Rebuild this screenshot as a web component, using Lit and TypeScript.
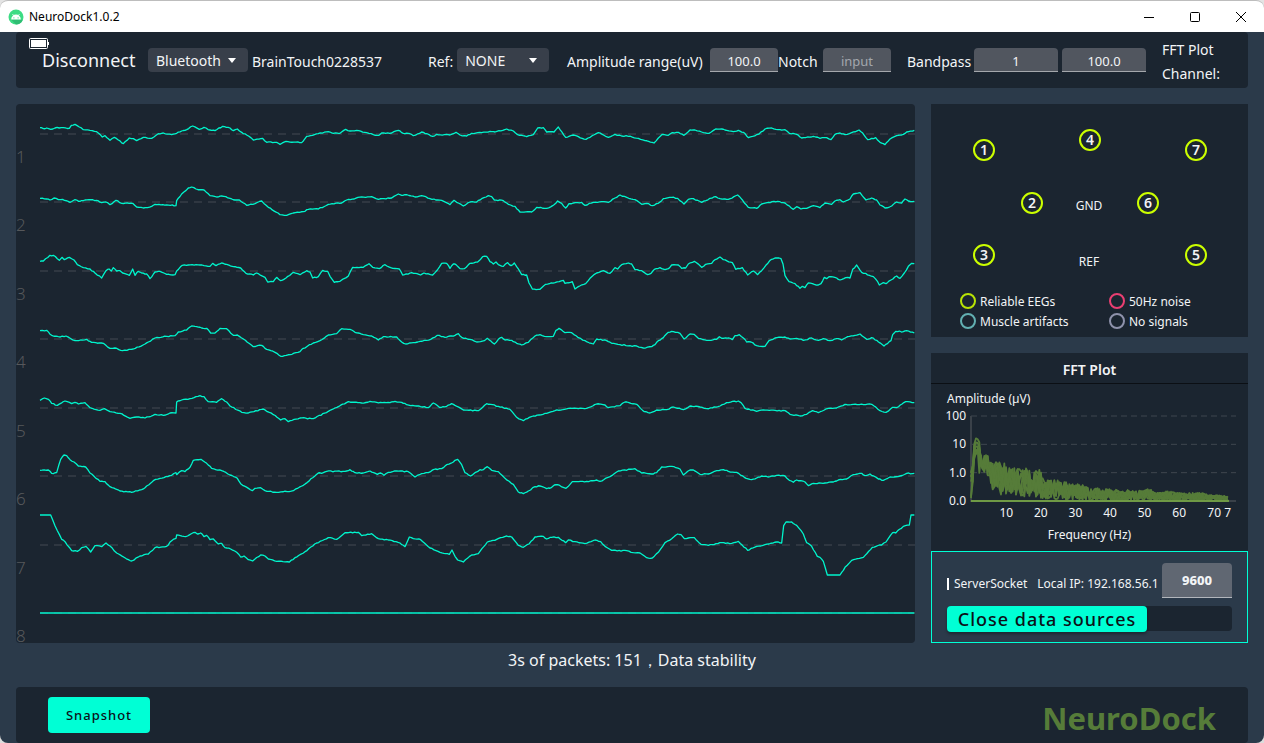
import { LitElement, html, svg, css } from "lit";
import { customElement, property } from "lit/decorators.js";

type Chunk = [origin: number, samples: string];
interface Channel {
  id: number;
  zero: number;
  chunks: Chunk[];
}

/* Each chunk is a run of "time,level" samples; origin shifts its time axis. */
const CHANNELS: Channel[] = [
  { id: 1, zero: 102, chunks: [
    [-120, "120,83 130,86 140,84 152,88 165,84 190,83 208,85 214,76 225,73 238,81 250,89 270,91 290,95 307,111 315,107 330,121 343,112 355,120 370,131 388,114 400,116 410,122 430,112 455,115 475,101 490,99 515,104 530,100 545,93 560,89 578,78 598,88 612,82 630,90 645,92 668,79 690,84 700,92 712,87 725,97 740,105 760,120 788,115 800,127 830,127 840,133 858,124 905,128 920,109 955,101 985,95 1000,100 1020,100 1037,88 1050,93 1070,91 1100,98 1120,104 1137,106 1145,99 1175,99 1195,91 1210,100 1225,100 1240,107 1265,96 1298,109 1310,103 1350,105 1368,97"],
    [1245, "5,98 15,105 35,108 50,100 80,98 105,94 120,96 155,87 175,93 188,104 215,110 235,104 248,84 265,83 275,96 297,96 310,81 332,112 355,105 370,110 393,118 430,98 460,112 480,103 500,108 520,109 550,115 570,122 597,129 622,103 640,106 652,98 670,97 687,106 705,90 720,90 740,96 762,100 782,87 800,87 815,91 835,95 850,91 865,97 880,113 912,102 930,87 950,84 975,89 990,89 1003,100 1025,103 1040,114 1075,109 1095,115 1115,113 1128,119 1140,103 1155,99 1170,104 1190,98 1212,90 1222,98 1238,119 1262,113 1275,127 1290,134 1305,117 1325,107 1340,105 1355,96 1378,91"]] },
  { id: 2, zero: 307, chunks: [
    [-120, "120,296 140,298 150,301 162,295 175,300 188,299 210,308 225,300 240,305 255,301 290,302 305,309 318,307 330,315 348,302 365,311 398,311 410,322 430,325 455,320 465,314 500,316 528,318 530,303 545,283 565,265 575,262 588,268 612,271 630,288 650,292 665,289 690,296 705,301 718,301 740,317 765,312 785,304 805,323 840,345 860,347 880,340 910,336 925,329 955,328 985,314 1025,310 1040,301 1085,292 1115,291 1135,299 1175,295 1195,283 1205,287 1215,285 1245,292 1265,288 1290,297 1325,302 1350,315 1362,302"],
    [1245, "5,308 25,319 45,307 65,307 80,297 100,288 110,291 118,301 145,303 160,314 180,320 195,337 230,337 245,323 275,326 293,318 308,304 320,311 332,325 342,312 355,310 380,308 390,317 415,308 440,306 460,308 480,295 495,286 515,293 540,300 560,314 575,311 593,318 610,311 625,297 650,293 668,296 687,313 700,299 715,297 740,308 765,296 782,291 795,297 820,299 848,286 858,296 880,323 905,326 920,313 940,308 968,305 990,310 1015,329 1025,321 1038,328 1055,326 1075,318 1095,324 1110,310 1130,314 1140,304 1155,300 1165,307 1185,298 1195,283 1215,279 1233,301 1250,295 1265,301 1275,316 1290,325 1310,319 1325,307 1340,310 1350,298 1360,304 1378,305"]] },
  { id: 3, zero: 511, chunks: [
    [-120, "120,482 130,481 150,464 160,464 178,479 186,470 193,477 208,470 222,478 232,492 250,501 270,505 285,517 305,532 318,510 327,505 334,511 340,501 350,511 360,510 368,517 388,524 398,505 405,524 414,512 425,517 440,520 450,534 465,514 480,512 500,521 525,522 530,511 547,494 600,493 630,497 638,488 648,495 665,487 680,491 700,498 722,502 738,518 760,523 770,517 795,530 803,544 820,543 830,530 842,540 858,532 880,515 900,522 920,510 930,514 938,532 955,528 968,509 983,512 990,527 1003,545 1020,542 1045,526 1058,500 1090,500 1107,489 1118,500 1138,504 1155,492 1172,501 1198,505 1208,523 1235,516 1262,523 1272,517 1298,523 1312,508 1325,488 1340,488 1350,503 1360,490"],
    [1245, "0,490 15,504 28,504 45,488 68,484 83,468 95,467 105,483 115,490 123,484 130,492 145,497 158,486 168,495 178,487 185,498 200,522 215,523 222,547 232,565 255,566 272,551 300,546 325,539 330,548 352,543 360,565 370,558 392,549 405,533 425,517 445,510 465,518 480,501 488,505 500,492 520,487 530,490 540,507 560,510 578,522 588,518 598,506 615,501 630,507 640,504 650,493 670,493 680,503 692,502 700,490 718,482 740,500 752,491 770,488 780,477 795,469 805,477 832,486 842,506 862,501 878,523 895,511 908,522 920,510 945,479 960,472 978,474 984,490 990,525 1002,543 1020,549 1035,563 1042,557 1050,561 1060,547 1090,553 1098,549 1108,530 1115,534 1122,528 1145,532 1155,538 1172,531 1185,532 1193,506 1205,493 1220,515 1255,528 1268,543 1273,553 1285,546 1293,549 1308,538 1325,526 1335,533 1348,517 1360,497 1370,488 1378,489"]] },
  { id: 4, zero: 717, chunks: [
    [-120, "120,692 140,691 155,706 175,710 198,708 215,718 230,722 260,718 275,727 310,730 330,745 345,744 368,752 400,747 435,732 445,726 465,714 500,709 525,707 535,696 560,690 575,678 590,680 605,684 620,685 632,699 645,699 660,685 680,686 700,706 712,705 730,717 760,740 785,736 800,748 825,757 842,769 870,764 900,755 910,745 940,729 960,722 985,705 1010,701 1025,686 1045,688 1055,690 1065,697 1080,700 1090,704 1115,708 1135,720 1150,710 1190,711 1205,726 1217,732 1240,728 1260,724 1292,718 1312,706 1335,712 1350,708"],
    [1245, "0,706 10,701 20,712 45,718 65,726 88,722 97,715 118,732 130,718 140,712 150,720 170,721 185,730 200,735 220,727 240,708 255,704 275,710 295,709 303,691 312,685 330,698 350,698 370,713 390,722 415,732 425,717 455,722 470,730 495,734 525,737 545,738 565,744 590,740 600,734 610,722 625,713 640,697 655,695 675,700 687,717 705,702 717,703 730,715 762,721 785,718 793,710 800,715 822,714 832,719 840,707 853,704 865,714 875,726 888,726 905,737 930,739 942,722 960,714 990,711 1005,717 1025,715 1045,721 1070,714 1090,721 1105,716 1125,722 1145,716 1160,720 1178,710 1200,706 1215,702 1235,718 1250,713 1265,721 1287,738 1308,722 1313,704 1322,694 1345,695 1355,692 1378,699"]] },
  { id: 5, zero: 202, chunks: [
    [-120, "120,179 133,172 145,176 155,188 172,194 195,181 215,189 225,185 235,190 255,186 270,201 300,209 313,204 330,213 360,218 390,233 410,229 435,232 465,221 490,224 510,217 528,217 530,184 545,178 570,174 600,165 612,168 625,183 650,185 665,174 680,184 690,196 725,215 745,217 790,205 820,222 842,238 855,234 865,243 900,232 940,234 985,212 1005,202 1045,183 1085,187 1110,182 1130,185 1170,186 1185,182 1205,185 1220,192 1250,196 1285,201 1300,187 1318,200 1340,197 1355,189"],
    [1245, "0,194 25,208 70,210 95,189 130,197 165,206 185,230 205,240 235,226 275,218 300,210 340,203 395,203 425,190 450,193 460,201 495,195 510,184 545,191 568,213 585,217 605,208 635,207 655,199 685,207 705,196 735,199 755,204 795,196 815,186 850,181 858,186 870,203 905,212 925,208 990,210 1005,221 1035,226 1055,221 1073,210 1090,216 1120,203 1145,202 1170,191 1250,191 1275,210 1293,215 1313,200 1325,201 1352,183 1378,186"]] },
  { id: 6, zero: 408, chunks: [
    [-120, "120,391 145,390 155,400 170,398 182,358 192,345 200,347 210,359 222,366 235,378 257,381 270,399 300,424 315,425 330,440 360,453 395,457 425,449 440,438 460,422 480,415 515,406 528,398 530,404 545,392 555,395 570,382 580,361 603,358 620,370 635,385 665,392 690,405 712,415 722,431 757,452 765,445 782,443 795,452 830,457 880,452 910,436 955,399 965,400 980,394 1035,394 1050,389 1065,398 1090,399 1110,393 1132,403 1142,399 1152,406 1165,397 1190,393 1225,395 1245,411 1265,401 1285,398 1300,389 1325,386 1340,374 1360,366"],
    [1245, "0,361 8,358 20,374 30,398 47,408 60,398 75,389 85,389 97,380 110,391 130,395 150,415 175,433 190,456 205,461 220,453 240,440 255,438 275,446 290,442 298,435 308,434 333,445 352,425 395,424 425,420 435,424 465,410 490,393 540,386 560,399 590,402 605,398 620,381 650,379 675,387 685,405 705,390 715,390 735,403 760,402 785,392 805,389 820,394 845,397 868,412 890,419 905,414 920,408 945,410 965,406 990,408 1003,421 1015,427 1025,420 1050,426 1060,437 1075,430 1110,429 1135,426 1150,420 1175,417 1195,404 1220,400 1230,407 1245,402 1270,417 1285,421 1305,411 1335,408 1355,400 1378,400"]] },
  { id: 7, zero: 613, chunks: [
    [-120, "120,523 152,523 165,555 185,596 195,603 215,630 232,632 245,621 258,617 272,634 285,615 305,618 318,607 330,616 350,637 385,657 395,661 420,646 445,640 465,621 500,617 515,600 528,593 530,583 557,588 585,575 592,580 602,577 612,588 620,584 630,597 640,595 655,610 665,608 675,621 692,625 710,635 722,649 732,646 745,657 758,661 782,643 795,646 805,655 830,662 868,664 885,651 915,633 950,607 985,591 1010,596 1035,576 1075,575 1085,585 1115,579 1135,594 1165,598 1200,607 1215,618 1228,589 1240,594 1262,597 1290,622 1320,635 1348,641 1356,628"],
    [1245, "0,647 8,658 25,664 50,643 70,639 97,604 125,596 155,586 170,589 190,614 205,620 222,610 240,589 265,587 275,595 290,590 310,590 332,606 340,598 360,603 390,609 420,598 437,603 450,617 470,629 515,630 535,636 555,637 575,651 592,652 610,635 630,606 650,594 668,580 678,582 688,594 718,591 738,611 760,614 800,606 830,608 850,602 862,614 878,629 905,617 930,612 965,604 980,607 986,555 993,544 1010,544 1025,554 1045,580 1055,606 1070,617 1087,647 1095,650 1105,662 1117,703 1155,703 1170,680 1190,659 1225,650 1252,620 1280,613 1293,604 1313,576 1322,577 1345,557 1363,553 1368,523 1378,523"]] },
  { id: 8, zero: 0, chunks: [[0, "0,0 2623,0"]] },
];

/* Small repeatable generator so the plots look the same on every load. */
function generator(seed: number): () => number {
  let s = seed * 7919 + 17;
  return () => {
    s = (s * 16807) % 2147483647;
    return s / 2147483647;
  };
}

function tracePath(ch: Channel): string {
  const pts: [number, number][] = [];
  for (const [origin, samples] of ch.chunks)
    for (const pair of samples.split(" ")) {
      const [x, y] = pair.split(",").map(Number);
      pts.push([x + origin, y - ch.zero]);
    }
  const rnd = generator(ch.id);
  let d = `M${pts[0][0]} ${pts[0][1]}`;
  for (let i = 1; i < pts.length; i++) {
    const [x0, y0] = pts[i - 1];
    const [x1, y1] = pts[i];
    const clipped = ch.id === 8 || (Math.abs(y0) >= 90 && y0 === y1);
    const n = clipped ? 1 : Math.max(1, Math.round((x1 - x0) / 6));
    for (let k = 1; k <= n; k++) {
      const t = k / n;
      const noise = k === n ? 0 : (rnd() - 0.5) * 3;
      d += `L${(x0 + (x1 - x0) * t).toFixed(1)} ${(y0 + (y1 - y0) * t + noise).toFixed(1)}`;
    }
  }
  return d;
}

const UPPER = [0, 85, 6, 110, 10, 172, 15, 188, 24, 183, 29, 150, 36, 118, 41, 152, 46, 163, 52, 125, 64, 112, 80, 122, 100, 116, 112, 98, 130, 104, 150, 98, 165, 102, 180, 104, 190, 88, 200, 100, 212, 86, 220, 66, 250, 64, 280, 60, 300, 54, 345, 46, 360, 40, 390, 38, 430, 34, 500, 32, 535, 36, 560, 26, 590, 30, 630, 24, 690, 26, 720, 20, 774, 14];
const LOWER = [0, 5, 5, 35, 10, 110, 20, 120, 25, 80, 30, 95, 40, 85, 55, 72, 66, 30, 78, 45, 90, 14, 120, 20, 150, 14, 200, 8, 260, 4, 400, 2, 774, 1];

function level(table: number[], x: number): number {
  for (let i = 2; i < table.length; i += 2)
    if (x <= table[i]) {
      const t = (x - table[i - 2]) / (table[i] - table[i - 2]);
      return table[i - 1] + (table[i + 1] - table[i - 1]) * t;
    }
  return table[table.length - 1];
}

function spectrumPath(index: number): string {
  const rnd = generator(index + 31);
  let d = "";
  for (let x = 0; x <= 774; x += 5) {
    const lo = level(LOWER, x);
    const hi = level(UPPER, x);
    const share = x < 26 && index > 3 ? index / 6 : rnd();
    const spike = index === 3 && x === 380 ? 30 : 0;
    const dip = index === 2 && x === 25 ? 60 : 0;
    d += `${d ? "L" : "M"}${x} ${(255 - lo - (hi - lo) * share - spike + dip).toFixed(1)}`;
  }
  return d;
}

const PINS = [
  { name: "1", x: 53, y: 46 },
  { name: "4", x: 159, y: 36 },
  { name: "7", x: 265, y: 46 },
  { name: "2", x: 101, y: 99 },
  { name: "6", x: 217, y: 99 },
  { name: "3", x: 53, y: 151 },
  { name: "5", x: 265, y: 151 },
];
const MARKS = [
  { name: "GND", x: 158, y: 101 },
  { name: "REF", x: 158, y: 157 },
];

const base = css`
  :host {
    box-sizing: border-box;
    color: #f2f4f6;
    font-family: "Noto Sans", "Open Sans", sans-serif;
  }
  *, *::before, *::after { box-sizing: border-box; }
  button, input, select { font-family: inherit; color: inherit; margin: 0; border: 0; }
`;

@customElement("title-bar")
export class TitleBar extends LitElement {
  static styles = [base, css`
    :host { display: block; background: #e4e4e4; }
    .bar {
      display: flex; align-items: center; justify-content: space-between;
      height: 32px; padding-left: 8px; background: #fff; color: #000;
      border-top: 1px solid #bdbdbd; border-radius: 8px 8px 0 0;
    }
    .name { display: flex; align-items: center; gap: 5px; font-size: 12px; }
    .buttons { display: flex; }
    .button { width: 46px; height: 30px; padding: 0; background: none; display: grid; place-items: center; color: #000; }
    svg { display: block; }
  `];
  render() {
    return html`<div class="bar">
      <div class="name">
        <svg width="16" height="16" viewBox="0 0 16 16">
          <circle cx="8" cy="8" r="7.5" fill="#3ddc84" />
          <path d="M3 10.5h10l1.6 1A7.5 7.5 0 0 1 8 15.5z" fill="#2fbd73" />
          <path d="M3.2 10.4a4.8 4.8 0 0 1 9.6 0z" fill="#fff" />
          <path d="M5.6 6.8 4.6 5M10.4 6.8l1-1.8" stroke="#fff" stroke-width=".8" />
          <circle cx="5.9" cy="8.8" r=".6" fill="#3ddc84" /><circle cx="10.1" cy="8.8" r=".6" fill="#3ddc84" />
        </svg>
        <span>NeuroDock1.0.2</span>
      </div>
      <div class="buttons">
        <button class="button" aria-label="Minimize"><svg width="10" height="10" viewBox="0 0 10 10"><path d="M0 5.5h10" stroke="currentColor" /></svg></button>
        <button class="button" aria-label="Maximize"><svg width="10" height="10" viewBox="0 0 10 10"><rect x=".5" y=".5" width="9" height="9" rx="1" fill="none" stroke="currentColor" /></svg></button>
        <button class="button" aria-label="Close"><svg width="10" height="10" viewBox="0 0 10 10"><path d="M0 0l10 10M10 0 0 10" stroke="currentColor" /></svg></button>
      </div>
    </div>`;
  }
}

@customElement("tool-bar")
export class ToolBar extends LitElement {
  static styles = [base, css`
    :host { display: block; }
    .bar {
      display: grid; grid-template-columns: 119fr 280fr 139fr 211fr 129fr 255fr 86fr;
      align-items: center; height: 56px; padding-left: 13px;
      background: #1b2530; border-radius: 4px; font-size: 14px; white-space: nowrap;
    }
    .account { display: flex; flex-direction: column; align-items: flex-start; align-self: start; padding-top: 6px; }
    .account svg { display: block; }
    .disconnect { background: none; padding: 0 0 0 13px; font-size: 18px; line-height: 20px; }
    .group { display: flex; align-items: center; }
    .link, .ref { gap: 4px; }
    .spread { justify-content: space-between; }
    .inset { padding-right: 16px; }
    .pair { display: flex; gap: 4px; }
    .text { line-height: 20px; padding-top: 4px; }
    .pick { display: grid; align-items: center; background: #383f4a; border-radius: 4px; height: 24px; }
    .pick > * { grid-area: 1 / 1; }
    .pick svg { justify-self: end; margin-right: 12px; pointer-events: none; }
    .pick select { appearance: none; background: none; height: 24px; width: 100%; padding: 0 8px; font-size: 14px; }
    .wide { width: 100px; }
    .mid { width: 92px; }
    .field {
      height: 24px; padding: 2px 0 0; background: #51565f; border-bottom: 1px solid #a4a7ac;
      border-radius: 4px 4px 0 0; text-align: center; font-size: 13px;
    }
    .field::placeholder { color: #a3a7ad; opacity: 1; }
    .short { width: 68px; }
    .long { width: 84px; }
    .fft { line-height: 24px; padding-top: 6px; align-self: start; }
  `];
  private arrow() {
    return html`<svg width="8" height="5" viewBox="0 0 8 5"><path d="M0 0h8L4 5z" fill="#fff" /></svg>`;
  }
  render() {
    return html`<div class="bar">
      <div class="account">
        <svg width="20" height="12" viewBox="0 0 20 12">
          <rect x=".5" y=".5" width="18" height="10" rx="1" fill="none" stroke="#fff" />
          <path d="M2 2h15v7H2zM19 4h1v3h-1z" fill="#fff" />
        </svg>
        <button class="disconnect">Disconnect</button>
      </div>
      <div class="group link">
        <div class="pick wide">
          <select aria-label="Connection"><option>Bluetooth</option></select>${this.arrow()}
        </div>
        <span class="text">BrainTouch0228537</span>
      </div>
      <div class="group ref">
        <label class="text" for="ref">Ref:</label>
        <div class="pick mid"><select id="ref"><option>NONE</option></select>${this.arrow()}</div>
      </div>
      <div class="group spread">
        <label class="text" for="amp">Amplitude range(uV)</label>
        <input class="field short" id="amp" value="100.0" />
      </div>
      <div class="group spread inset">
        <label class="text" for="notch">Notch</label>
        <input class="field short" id="notch" placeholder="input" />
      </div>
      <div class="group spread inset">
        <label class="text" for="low">Bandpass</label>
        <div class="pair">
          <input class="field long" id="low" value="1" />
          <input class="field long" aria-label="Bandpass high" value="100.0" />
        </div>
      </div>
      <div class="fft">FFT Plot<br />Channel:</div>
    </div>`;
  }
}

@customElement("signal-panel")
export class SignalPanel extends LitElement {
  @property({ attribute: false }) channels: Channel[] = CHANNELS;
  static styles = [base, css`
    :host { display: grid; }
    .panel { display: grid; grid-template-rows: repeat(7, 1fr) 60px; background: #1b2530; border-radius: 4px; }
    .row { display: grid; grid-template-columns: 24px 1fr; height: 60px; }
    .label { align-self: end; font-size: 17px; line-height: 14px; font-weight: 300; color: #56585b; }
    .trace { display: block; width: 100%; height: 60px; overflow: visible; }
    .zero { stroke: #454b53; stroke-width: 1; stroke-dasharray: 8 6; vector-effect: non-scaling-stroke; }
    .wave { fill: none; stroke: #00f5cc; stroke-width: 1.3; vector-effect: non-scaling-stroke; stroke-linejoin: round; }
  `];
  render() {
    return html`<div class="panel">
      ${this.channels.map((ch) => html`<div class="row">
        <span class="label">${ch.id}</span>
        <svg class="trace" viewBox="0 -90 2625 180" preserveAspectRatio="none">
          <path class="zero" d="M0 0H2625" />
          <path class="wave" d=${tracePath(ch)} />
        </svg>
      </div>`)}
    </div>`;
  }
}

@customElement("electrode-map")
export class ElectrodeMap extends LitElement {
  static styles = [base, css`
    :host { display: block; }
    .panel { background: #1b2530; padding-bottom: 6px; }
    .map { position: relative; height: 187px; }
    .pin, .mark { position: absolute; transform: translate(-50%, -50%); }
    .pin {
      width: 22px; height: 22px; border: 2px solid #ccff00; border-radius: 50%;
      display: grid; place-items: center; font-size: 14px; line-height: 18px; font-weight: 600;
    }
    .mark { font-size: 12px; }
    .legend {
      display: grid; grid-template-columns: 149fr 139fr; grid-auto-rows: 20px;
      padding-left: 29px; font-size: 12px;
    }
    .entry { display: flex; align-items: center; gap: 4px; }
    .ring { width: 16px; height: 16px; border-radius: 50%; border: 2px solid; }
    .good { border-color: #b9e305; }
    .hum { border-color: #ea3f72; }
    .muscle { border-color: #62b0b2; }
    .none { border-color: #8e92ab; }
  `];
  private entry(kind: string, text: string) {
    return html`<div class="entry"><span class="ring ${kind}"></span><span>${text}</span></div>`;
  }
  render() {
    const at = (p: { x: number; y: number }) => `left:${((p.x / 317) * 100).toFixed(2)}%;top:${p.y}px`;
    return html`<div class="panel">
      <div class="map">
        ${PINS.map((p) => html`<span class="pin" style=${at(p)}>${p.name}</span>`)}
        ${MARKS.map((p) => html`<span class="mark" style=${at(p)}>${p.name}</span>`)}
      </div>
      <div class="legend">
        ${this.entry("good", "Reliable EEGs")}${this.entry("hum", "50Hz noise")}
        ${this.entry("muscle", "Muscle artifacts")}${this.entry("none", "No signals")}
      </div>
    </div>`;
  }
}

@customElement("fft-panel")
export class FftPanel extends LitElement {
  static styles = [base, css`
    :host { display: block; background: #1b2530; font-size: 12px; }
    .title {
      margin: 0; height: 31px; line-height: 34px; border-bottom: 1px solid #0b0f14;
      text-align: center; font-size: 14px; font-weight: 600;
    }
    .body { padding: 6px 12px 0 16px; }
    .name { line-height: 18px; }
    .chart { display: grid; grid-template-columns: 19px 1fr; column-gap: 5px; }
    .levels { display: flex; flex-direction: column; justify-content: space-between; height: 101px; line-height: 16px; margin-bottom: -4px; }
    .levels span { display: flex; justify-content: flex-end; }
    .plot { display: block; width: 100%; height: 85px; margin-top: 8px; overflow: visible; }
    .grid { stroke: #3f464f; stroke-dasharray: 6 4; vector-effect: non-scaling-stroke; }
    .axis { stroke: #3a4149; vector-effect: non-scaling-stroke; stroke-width: 2; fill: none; }
    .wave { fill: none; stroke: #567c39; vector-effect: non-scaling-stroke; stroke-width: 1.8; stroke-linejoin: round; }
    .floor { stroke: #6f9a45; vector-effect: non-scaling-stroke; stroke-width: 2; }
    .ticks {
      display: grid; grid-template-columns: repeat(7, 1fr); padding: 0 5px 0 42px;
      text-align: center; line-height: 16px; white-space: nowrap;
    }
    .last { text-align: right; }
    .unit { padding: 6px 4px 0 0; text-align: center; line-height: 16px; }
  `];
  render() {
    return html`<h2 class="title">FFT Plot</h2>
      <div class="body">
        <div class="name">Amplitude (µV)</div>
        <div class="chart">
          <div class="levels"><span>100</span><span>10</span><span>1.0</span><span>0.0</span></div>
          <svg class="plot" viewBox="0 0 795 255" preserveAspectRatio="none">
            ${[0, 85, 170].map((y) => svg`<path class="grid" d="M0 ${y}H795" />`)}
            <path class="axis" d="M0 0V255H795" />
            ${[0, 1, 2, 3, 4, 5, 6].map((i) => svg`<path class="wave" d=${spectrumPath(i)} />`)}
            <path class="floor" d="M0 255H774" />
          </svg>
        </div>
        <div class="ticks">
          ${[10, 20, 30, 40, 50, 60].map((n) => html`<span>${n}</span>`)}<span class="last">70 7</span>
        </div>
        <div class="unit">Frequency (Hz)</div>
      </div>`;
  }
}

@customElement("server-card")
export class ServerCard extends LitElement {
  static styles = [base, css`
    :host { display: block; }
    .card { border: 1px solid #00ffd5; padding: 11px 15px 10px; height: 92px; }
    .line { display: flex; align-items: center; font-size: 12px; white-space: nowrap; }
    .bar { width: 2px; height: 12px; background: #fff; margin-top: 6px; }
    .kind { padding: 6px 0 0 5px; }
    .address { flex: 1; min-width: 0; overflow: hidden; padding: 6px 0 0 10px; }
    .port {
      width: 70px; height: 35px; padding: 0; background: #606772; border-bottom: 1px solid #b2b6bc;
      border-radius: 4px 4px 0 0; text-align: center; font-size: 13px; font-weight: 800;
    }
    .action { display: flex; margin-top: 8px; background: #1b2530; border-radius: 4px; height: 25px; }
    .close {
      width: 200px; height: 26px; padding: 0; background: #00ffd5; color: #0c1118; border-radius: 4px;
      font-size: 18px; line-height: 26px; font-weight: 500; letter-spacing: 1px; box-shadow: 0 2px 3px #0005;
    }
  `];
  render() {
    return html`<div class="card">
      <div class="line">
        <span class="bar"></span><span class="kind">ServerSocket</span>
        <label class="address" for="port">Local IP: 192.168.56.1</label>
        <input class="port" id="port" value="9600" />
      </div>
      <div class="action"><button class="close">Close data sources</button></div>
    </div>`;
  }
}

@customElement("app-root")
export class AppRoot extends LitElement {
  static styles = [base, css`
    :host { display: flex; flex-direction: column; min-height: 100vh; background: #dcdcdc; }
    .window {
      flex: 1; display: flex; flex-direction: column; padding: 0 16px;
      background: #2b3a4a; border-radius: 0 0 8px 8px;
    }
    .main { flex: 1; display: grid; grid-template-columns: 899fr 317fr; gap: 16px; padding-top: 16px; }
    .side { display: flex; flex-direction: column; }
    .fft { flex: 1; margin-top: 16px; }
    .status { height: 44px; line-height: 34px; text-align: center; font-size: 16px; }
    .footer {
      display: flex; align-items: center; justify-content: space-between; height: 56px;
      padding: 0 32px; background: #1b2530; border-radius: 4px;
    }
    .snapshot {
      width: 102px; height: 36px; padding: 0; background: #00ffd5; color: #0c1118;
      border-radius: 4px; font-size: 13px; font-weight: 500; letter-spacing: 1px;
    }
    .brand { font-size: 31px; line-height: 40px; font-weight: 700; color: #567c39; padding-top: 6px; }
  `];
  render() {
    return html`<title-bar></title-bar>
      <div class="window">
        <tool-bar></tool-bar>
        <div class="main">
          <signal-panel></signal-panel>
          <div class="side">
            <electrode-map></electrode-map>
            <fft-panel class="fft"></fft-panel>
            <server-card></server-card>
          </div>
        </div>
        <div class="status">3s of packets: 151，Data stability</div>
        <div class="footer">
          <button class="snapshot">Snapshot</button>
          <span class="brand">NeuroDock</span>
        </div>
      </div>`;
  }
}
